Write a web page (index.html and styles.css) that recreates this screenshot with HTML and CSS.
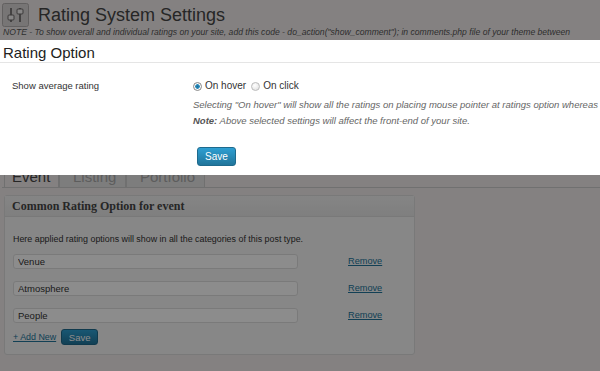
FILE: index.html
```html
<!DOCTYPE html>
<html lang="en">
<head>
    <meta charset="UTF-8">
    <meta name="viewport" content="width=device-width, initial-scale=1.0">
    <title>Rating System Settings</title>
    <link rel="stylesheet" href="styles.css">
</head>
<body>

    <div class="wrap">
        <!-- Page header -->
        <div class="page-head">
            <span class="head-icon">
                <svg width="27" height="24" viewBox="0 0 27 24">
                    <rect x="0.5" y="0.5" width="26" height="23" rx="2" fill="#d9d6d6" stroke="#b3afaf"/>
                    <line x1="9" y1="5" x2="9" y2="19" stroke="#7d7979" stroke-width="2"/>
                    <line x1="18" y1="5" x2="18" y2="19" stroke="#7d7979" stroke-width="2"/>
                    <rect x="6" y="12" width="6" height="5" rx="1" fill="#f4f2f2" stroke="#6f6b6b"/>
                    <rect x="15" y="6" width="6" height="5" rx="1" fill="#f4f2f2" stroke="#6f6b6b"/>
                </svg>
            </span>
            <h2>Rating System Settings</h2>
        </div>
        <p class="note">NOTE - To show overall and individual ratings on your site, add this code - do_action("show_comment"); in comments.php file of your theme between</p>

        <!-- Post type tabs -->
        <div class="nav-tabs">
            <a class="nav-tab active">Event</a>
            <a class="nav-tab">Listing</a>
            <a class="nav-tab">Portfolio</a>
        </div>

        <!-- Rating options for the post type -->
        <div class="postbox">
            <h3 class="postbox-title">Common Rating Option for event</h3>
            <div class="postbox-body">
                <p class="intro">Here applied rating options will show in all the categories of this post type.</p>
                <div class="rating-fields">
                    <div class="field-row">
                        <input type="text" value="Venue">
                        <a class="remove">Remove</a>
                    </div>
                    <div class="field-row">
                        <input type="text" value="Atmosphere">
                        <a class="remove">Remove</a>
                    </div>
                    <div class="field-row">
                        <input type="text" value="People">
                        <a class="remove">Remove</a>
                    </div>
                </div>
                <div class="box-actions">
                    <a class="add-new">+ Add New</a>
                    <button class="button-primary small">Save</button>
                </div>
            </div>
        </div>
    </div>

    <!-- Dim layer and popup -->
    <div class="overlay"></div>
    <div class="modal">
        <h3 class="modal-title">Rating Option</h3>
        <div class="opt-row">
            <div class="opt-label">Show average rating</div>
            <div class="opt-field">
                <div class="radios">
                    <label><input type="radio" name="avg" checked> On hover</label>
                    <label><input type="radio" name="avg"> On click</label>
                </div>
                <p class="desc">Selecting "On hover" will show all the ratings on placing mouse pointer at ratings option whereas</p>
                <p class="desc"><b>Note:</b> Above selected settings will affect the front-end of your site.</p>
                <button class="button-primary">Save</button>
            </div>
        </div>
    </div>

</body>
</html>
```

FILE: styles.css
```css
* {
    box-sizing: border-box;
}
body {
    margin: 0;
    background: #f1ecec;
    font-family: 'Liberation Sans', Arial, sans-serif;
    color: #333;
    overflow: hidden;
}
.wrap {
    padding: 3px 0 0 2px;
    height: 371px;
}
.page-head {
    display: flex;
    align-items: center;
    gap: 9px;
    height: 24px;
}
.head-icon {
    display: block;
    height: 24px;
}
.page-head h2 {
    margin: 0;
    font-size: 18px;
    font-weight: normal;
    color: #464646;
    line-height: 22px;
}
.note {
    margin: 0;
    padding-left: 1px;
    font-size: 8.6px;
    font-style: italic;
    color: #555;
    white-space: nowrap;
    line-height: 12px;
    margin-top: -1px;
}

/* tabs */
.nav-tabs {
    display: flex;
    margin-top: 125px;
    padding-left: 2px;
    border-bottom: 1px solid #ccc;
    height: 25px;
}
.nav-tab {
    display: block;
    font-size: 15px;
    line-height: 25px;
    padding: 0 8px 0 7px;
    color: #aaa;
    background: #e4e4e4;
    border: 1px solid #ccc;
    border-bottom: none;
    border-radius: 3px 3px 0 0;
}
.nav-tab.active {
    color: #464646;
    background: #f1ecec;
    width: 55px;
}
.nav-tab:nth-child(2) {
    width: 67px;
    padding-left: 13px;
}
.nav-tab:nth-child(3) {
    width: 79px;
    padding-left: 13px;
}

/* box */
.postbox {
    margin: 7px 0 0 2px;
    width: 411px;
    background: #f6f6f6;
    border: 1px solid #dcdcdc;
    border-radius: 3px;
}
.postbox-title {
    margin: 0;
    height: 21px;
    padding-left: 7px;
    font-family: 'Liberation Serif', 'Times New Roman', serif;
    font-size: 12px;
    line-height: 20px;
    color: #464646;
    background: linear-gradient(#f2f2f2, #e8e8e8);
    border-bottom: 1px solid #dcdcdc;
}
.postbox-body {
    padding: 14px 8px 9px 8px;
    font-size: 9.5px;
}
.intro {
    margin: 0;
    font-size: 8.9px;
    line-height: 16px;
}
.rating-fields {
    display: flex;
    flex-direction: column;
    gap: 12.5px;
    margin-top: 7px;
}
.field-row {
    display: flex;
    align-items: center;
    gap: 50px;
}
.field-row input {
    width: 285px;
    height: 14.5px;
    padding: 0 4px;
    font-family: 'Liberation Sans', Arial, sans-serif;
    font-size: 9.5px;
    color: #333;
    background: #fff;
    border: 1px solid #dfdfdf;
    border-radius: 3px;
}
.remove, .add-new {
    color: #21759b;
    text-decoration: underline;
    cursor: pointer;
}
.remove {
    font-size: 9.2px;
}
.add-new {
    font-size: 8.9px;
}
.box-actions {
    display: flex;
    align-items: center;
    gap: 5px;
    margin-top: 6.5px;
}

/* buttons */
.button-primary {
    width: 39px;
    height: 19px;
    padding: 0;
    font-family: 'Liberation Sans', Arial, sans-serif;
    font-size: 10px;
    color: #fff;
    background: linear-gradient(#2e9fd2, #21759b);
    border: 1px solid #1e6a8d;
    border-radius: 3px;
    cursor: pointer;
}
.button-primary.small {
    width: 37px;
    height: 16px;
    font-size: 9.5px;
}

/* dim layer */
.overlay {
    position: fixed;
    inset: 0;
    background: rgba(0, 0, 0, 0.45);
}
.modal {
    position: absolute;
    top: 40px;
    left: 0;
    right: 0;
    height: 135px;
    background: #fff;
    overflow: hidden;
}
.modal-title {
    margin: 0;
    padding: 4px 0 1px 3px;
    font-size: 15px;
    font-weight: normal;
    line-height: 17px;
    color: #222;
    border-bottom: 1px solid #e5e5e5;
}
.opt-row {
    display: grid;
    grid-template-columns: 181px 1fr;
    padding: 15px 0 0 12px;
    font-size: 9.5px;
}
.opt-label {
    line-height: 16px;
    color: #333;
}
.radios {
    display: flex;
    gap: 5px;
    line-height: 16px;
    white-space: nowrap;
    font-size: 10px;
}
.radios label {
    display: flex;
    align-items: center;
    gap: 3px;
}
.radios input {
    appearance: none;
    margin: 0;
    width: 9px;
    height: 9px;
    border: 1px solid #bbb;
    border-radius: 50%;
    background: radial-gradient(circle at 40% 35%, #fff, #ddd);
}
.radios input:checked {
    background: radial-gradient(circle, #1c6f97 0, #2a8cbd 2px, #fff 2.6px, #e4e4e4 100%);
    border-color: #888;
}
.desc {
    margin: 0;
    line-height: 16px;
    font-style: italic;
    color: #666;
    white-space: nowrap;
}
.desc:first-of-type {
    margin-top: 3px;
}
.desc b {
    color: #555;
}
.opt-field .button-primary {
    margin: 18px 0 0 4px;
}
```
